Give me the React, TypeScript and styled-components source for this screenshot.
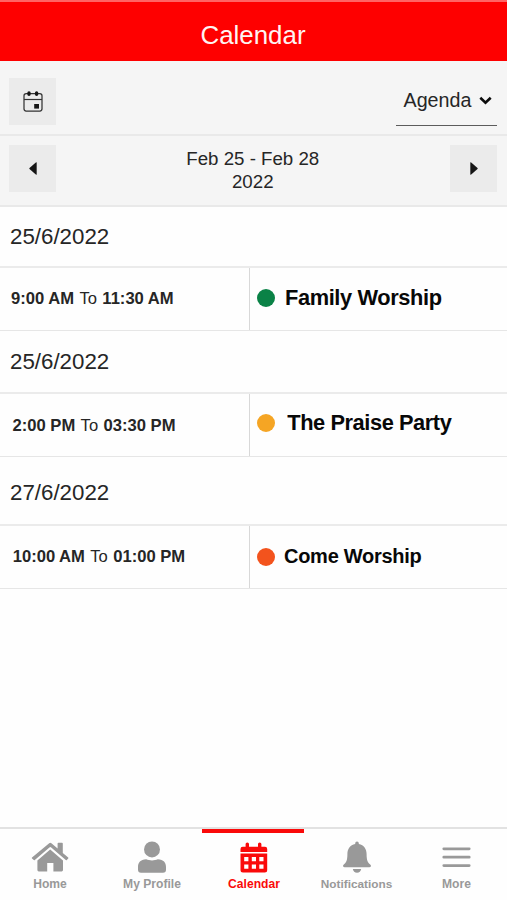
import React from "react";
import styled, { createGlobalStyle } from "styled-components";

const GlobalStyle = createGlobalStyle`
  * { box-sizing: border-box; }
  body {
    margin: 0;
    background: #fefefe;
    font-family: "Liberation Sans", Arial, sans-serif;
    color: #262626;
  }
  button { font: inherit; color: inherit; border: 0; padding: 0; }
`;

const Screen = styled.div`
  width: 507px;
  height: 900px;
  display: flex;
  flex-direction: column;
  overflow: hidden;
`;

const Header = styled.header`
  height: 61px;
  flex: none;
  border-top: 2px solid #ff6464;
  background: #fe0000;
  color: #fff4f2;
  display: flex;
  justify-content: center;
  padding-top: 18px;
  font-size: 25.9px;
  line-height: 30px;
`;

const Title = styled.h1`
  margin: 0;
  font: inherit;
  transform: translateX(-0.5px);
`;

const Toolbar = styled.div<{ $height: number; $top: number }>`
  height: ${(p) => p.$height}px;
  flex: none;
  display: flex;
  align-items: flex-start;
  justify-content: space-between;
  padding: ${(p) => p.$top}px 10px 0 9px;
  background: #f5f5f5;
  border-bottom: 2px solid #e9e9e9;
`;

const SquareButton = styled.button`
  width: 47px;
  height: 47px;
  display: grid;
  place-items: center;
  background: #ebebeb;
`;

const ViewSelect = styled.button`
  width: 101px;
  height: 48px;
  display: flex;
  align-items: center;
  gap: 7.5px;
  padding: 0 0 3px 7.5px;
  background: transparent;
  border-bottom: 1px solid #5c5c5c;
  font-size: 19.7px;
`;

const Range = styled.div`
  padding: 2px 0.5px 0 0;
  text-align: center;
  font-size: 18.7px;
  line-height: 23px;
`;

const DateHeading = styled.h2<{ $height: number; $top: number }>`
  height: ${(p) => p.$height}px;
  flex: none;
  margin: 0;
  padding: ${(p) => p.$top}px 0 0 10px;
  font-size: 22.3px;
  font-weight: 400;
  line-height: 26px;
`;

const EventRow = styled.div`
  height: 65px;
  flex: none;
  display: grid;
  grid-template-columns: 250px 1fr;
  border-top: 2px solid #ebebeb;
  border-bottom: 1px solid #e6e6e6;
`;

const Time = styled.div<{ $left: number; $shift: number }>`
  display: flex;
  align-items: center;
  gap: 5.4px;
  padding: ${(p) => p.$shift}px 0 1px ${(p) => p.$left}px;
  border-right: 1px solid #d8d8d8;
  font-size: 16.6px;
  white-space: nowrap;
`;

const EventName = styled.div<{ $size: number; $gap: number; $shift: number; $tracking: number }>`
  display: flex;
  align-items: center;
  gap: ${(p) => p.$gap}px;
  padding: 0 0 ${(p) => p.$shift}px 7px;
  font-size: ${(p) => p.$size}px;
  letter-spacing: ${(p) => p.$tracking}px;
  font-weight: 700;
  color: #080808;
  white-space: nowrap;
`;

const Dot = styled.span<{ $color: string }>`
  width: 18px;
  height: 18px;
  flex: none;
  border-radius: 50%;
  background: ${(p) => p.$color};
`;

const Agenda = styled.main`
  flex: 1;
`;

const TabBar = styled.nav`
  height: 73px;
  flex: none;
  display: grid;
  grid-template-columns: 100px 102px 102px 103px 97px;
  padding-right: 3px;
  border-top: 2px solid #e2e2e2;
`;

const Tab = styled.a<{ $active?: boolean; $size?: number }>`
  display: flex;
  flex-direction: column;
  align-items: center;
  color: ${(p) => (p.$active ? "#fa0a0a" : "#999")};
  border-top: 4px solid ${(p) => (p.$active ? "#fa0a0a" : "transparent")};
  font-size: ${(p) => p.$size ?? 12.1}px;
  font-weight: 700;
  line-height: 14px;
  & + & {
    padding-left: 2px;
  }
`;

const TabIcon = styled.span`
  height: 44px;
  display: flex;
  align-items: center;
  padding-top: 4px;
`;

const CalendarOutline = () => (
  <svg width="20" height="21" viewBox="0 0 20 21" fill="none" stroke="#333">
    <rect x="1" y="2.5" width="18" height="17.5" rx="2.2" strokeWidth="1.25" />
    <path d="M1 8.5H19" strokeWidth="1.2" />
    <path d="M6 1.9V3.2M13.6 1.9V3.2" stroke="#161616" strokeWidth="3.4" strokeLinecap="round" />
    <rect x="11.2" y="13" width="4.8" height="4.6" fill="#161616" stroke="none" />
  </svg>
);

const Chevron = () => (
  <svg width="13" height="9" viewBox="0 0 13 9" fill="none">
    <path d="M1.3 1.8L6.5 6.8L11.7 1.8" stroke="#0c0c0c" strokeWidth="2.6" />
  </svg>
);

const Arrow = ({ right }: { right?: boolean }) => (
  <svg width="8" height="13" viewBox="0 0 8 13" fill="#161616">
    <path d={right ? "M.3.5Q.3 0 1.2.4L7.5 5.9Q8 6.5 7.5 7.1L1.2 12.6Q.3 13 .3 12.4Z" : "M7.7.5Q7.7 0 6.8.4L.5 5.9Q0 6.5.5 7.1L6.8 12.6Q7.7 13 7.7 12.4Z"} />
  </svg>
);

const House = () => (
  <svg width="38" height="30" viewBox="0 0 38 30" fill="currentColor">
    <path d="M18.2 1.2Q19.3.2 20.4 1.2L26.6 6.6V1.6Q26.6.8 27.4.8H31Q31.8.8 31.8 1.6V11L37.2 15.5Q37.7 16 37.2 16.5L35.8 18Q35.3 18.5 34.8 18L20.2 5.4Q19.3 4.7 18.4 5.4L3.8 18Q3.3 18.5 2.8 18L1 16.5Q.5 16 1 15.5Z" />
    <path d="M19.2 7.6L32 18.5V28Q32 29.4 30.6 29.4H22.4V21H16.2V29.4H7.8Q6.4 29.4 6.4 28V18.5Z" />
  </svg>
);

const Person = () => (
  <svg width="28" height="32" viewBox="0 0 28 32" fill="currentColor">
    <circle cx="14" cy="8.4" r="8" />
    <path d="M8.2 18.3C11.5 19.8 16.5 19.8 19.8 18.3C25.6 18.3 28 22 28 26V28.8C28 30.8 27 31.8 25 31.8H3C1 31.8 0 30.8 0 28.8V26C0 22 2.4 18.3 8.2 18.3Z" />
  </svg>
);

const CalendarSolid = () => (
  <svg width="28" height="31" viewBox="0 0 28 31" fill="currentColor">
    <path d="M.5 10V7Q.5 4.8 2.7 4.8H5.6V2Q5.6.5 7.3.5T9 2V4.8H18V2Q18 .5 19.7.5T21.4 2V4.8H25Q27.2 4.8 27.2 7V10Z" />
    <path
      fillRule="evenodd"
      d="M.5 11.6H27.2V28Q27.2 30.5 24.7 30.5H3Q.5 30.5.5 28ZM4.2 15V19.2H8.4V15ZM11.8 15V19.2H16V15ZM19.3 15V19.2H23.5V15ZM4.2 22.6V26.8H8.4V22.6ZM11.8 22.6V26.8H16V22.6ZM19.3 22.6V26.8H23.5V22.6Z"
    />
  </svg>
);

const Bell = () => (
  <svg width="28" height="32" viewBox="0 0 28 32" fill="currentColor">
    <path d="M14 .5Q15.8.5 15.8 2.3V3.1C21 4.2 23.6 8.2 23.6 13C23.6 19.5 24.8 21.4 27.2 23.6Q28 24.4 28 25.1Q28 26.2 26.5 26.2H1.5Q0 26.2 0 25.1Q0 24.4.8 23.6C3.2 21.4 4.4 19.5 4.4 13C4.4 8.2 7 4.2 12.2 3.1V2.3Q12.2.5 14 .5Z" />
    <path d="M9.8 28.1H18.2Q17.5 31.8 14 31.8T9.8 28.1Z" />
  </svg>
);

const Menu = () => (
  <svg width="29" height="21" viewBox="0 0 29 21" stroke="currentColor" strokeWidth="2.8" strokeLinecap="round">
    <path d="M1.8 1.8H27.2M1.8 10.2H27.2M1.8 18.6H27.2" />
  </svg>
);

const events = [
  { date: "25/6/2022", height: 59, top: 17, from: "9:00 AM", to: "11:30 AM", left: 11, timeShift: 1, name: "Family Worship", color: "#0a8246", size: 21.8, tracking: -0.38, gap: 10, shift: 2 },
  { date: "25/6/2022", height: 61, top: 18, from: "2:00 PM", to: "03:30 PM", left: 12.5, timeShift: 2, name: "The Praise Party", color: "#f5a524", size: 21.8, tracking: -0.42, gap: 12.3, shift: 4 },
  { date: "27/6/2022", height: 67, top: 23, from: "10:00 AM", to: "01:00 PM", left: 12.7, timeShift: 1, name: "Come Worship", color: "#f3531d", size: 20, tracking: -0.27, gap: 9, shift: 1 },
];

const tabs = [
  { label: "Home", icon: <House /> },
  { label: "My Profile", icon: <Person /> },
  { label: "Calendar", icon: <CalendarSolid />, active: true },
  { label: "Notifications", icon: <Bell />, size: 11.8 },
  { label: "More", icon: <Menu /> },
];

export default function App() {
  return (
    <Screen>
      <GlobalStyle />
      <Header>
        <Title>Calendar</Title>
      </Header>
      <Toolbar $height={75} $top={17}>
        <SquareButton aria-label="Pick a date">
          <CalendarOutline />
        </SquareButton>
        <ViewSelect>
          Agenda
          <Chevron />
        </ViewSelect>
      </Toolbar>
      <Toolbar $height={71} $top={9}>
        <SquareButton aria-label="Previous">
          <Arrow />
        </SquareButton>
        <Range>
          Feb 25 - Feb 28
          <br />
          2022
        </Range>
        <SquareButton aria-label="Next">
          <Arrow right />
        </SquareButton>
      </Toolbar>
      <Agenda>
        {events.map((e) => (
          <React.Fragment key={e.name}>
            <DateHeading $height={e.height} $top={e.top}>
              {e.date}
            </DateHeading>
            <EventRow>
              <Time $left={e.left} $shift={e.timeShift}>
                <b>{e.from}</b>
                <span>To</span>
                <b>{e.to}</b>
              </Time>
              <EventName $size={e.size} $gap={e.gap} $shift={e.shift} $tracking={e.tracking}>
                <Dot $color={e.color} />
                {e.name}
              </EventName>
            </EventRow>
          </React.Fragment>
        ))}
      </Agenda>
      <TabBar>
        {tabs.map((t) => (
          <Tab key={t.label} $active={t.active} $size={t.size}>
            <TabIcon>{t.icon}</TabIcon>
            {t.label}
          </Tab>
        ))}
      </TabBar>
    </Screen>
  );
}
